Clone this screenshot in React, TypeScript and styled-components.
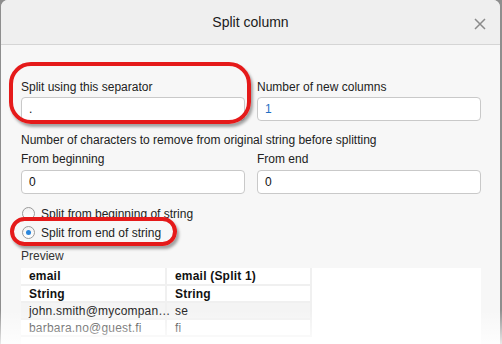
import React from 'react'
import styled, { createGlobalStyle } from 'styled-components'

const GlobalStyle = createGlobalStyle`
  html, body {
    margin: 0;
    padding: 0;
    background: #ffffff;
  }
  body {
    font-family: "Liberation Sans", Arial, sans-serif;
    font-size: 12px;
    color: #222;
  }
`

const Frame = styled.div`
  position: relative;
  width: 502px;
  height: 344px;
  background: #8e8e8e;
  padding: 0 2px 0 1px;
  box-sizing: border-box;
  overflow: hidden;
`

const Dialog = styled.div`
  height: 100%;
  background: #f7f7f7;
  border-radius: 7px 7px 0 0;
  overflow: hidden;
`

const Header = styled.div`
  position: relative;
  height: 44px;
  background: #efefef;
  border-bottom: 1px solid #d5d5d5;
  display: flex;
  align-items: center;
  justify-content: center;
  font-size: 14px;
  color: #1a1a1a;
`

const CloseButton = styled.div`
  position: absolute;
  right: 14px;
  top: 17px;
  width: 12px;
  height: 12px;
`

const Body = styled.div`
  padding: 35px 19px 0 20px;
`

const Grid = styled.div`
  display: grid;
  grid-template-columns: 224px 224px;
  column-gap: 12px;
`

const Field = styled.div`
  display: flex;
  flex-direction: column;
`

const Label = styled.div<{ $gap?: number }>`
  line-height: 14px;
  margin-bottom: ${p => p.$gap ?? 3}px;
`

const SectionLabel = styled.div`
  line-height: 14px;
  margin: 12px 0 5px;
`

const Input = styled.div<{ $blue?: boolean }>`
  height: 24px;
  box-sizing: border-box;
  background: #fff;
  border: 1px solid #c9c9c9;
  border-radius: 4px;
  padding: 0 7px;
  display: flex;
  align-items: center;
  line-height: 14px;
  color: ${p => (p.$blue ? '#1f6fc4' : '#111')};
`

const Radios = styled.div`
  margin-top: 10px;
  display: flex;
  flex-direction: column;
`

const RadioRow = styled.div`
  height: 19px;
  display: flex;
  align-items: center;
  gap: 6px;
  padding-left: 1px;
`

const RadioCircle = styled.span<{ $checked?: boolean }>`
  width: 13px;
  height: 13px;
  box-sizing: border-box;
  border-radius: 50%;
  border: 1px solid #9a9a9a;
  background: linear-gradient(#f2f2f2, #ffffff);
  display: flex;
  align-items: center;
  justify-content: center;
  &::after {
    content: '';
    display: ${p => (p.$checked ? 'block' : 'none')};
    width: 5px;
    height: 5px;
    border-radius: 50%;
    background: #2a86dc;
  }
`

const PreviewLabel = styled.div`
  line-height: 14px;
  margin: 7px 0 5px;
  color: #333;
`

const PreviewBox = styled.div`
  width: 460px;
  height: 80px;
  background: #fff;
`

const Table = styled.table`
  border-collapse: collapse;
  width: 291px;
  table-layout: fixed;
`

const Row = styled.tr<{ $shade?: boolean }>`
  background: ${p => (p.$shade ? '#f4f4f4' : '#fff')};
`

const Cell = styled.td<{ $bold?: boolean }>`
  height: 17px;
  box-sizing: border-box;
  padding: 0 8px;
  border-right: 2px solid #f0f0f0;
  border-bottom: 2px solid #f0f0f0;
  font-weight: ${p => (p.$bold ? 'bold' : 'normal')};
  color: ${p => (p.$bold ? '#111' : '#222')};
  letter-spacing: 0.2px;
  white-space: nowrap;
  line-height: 14px;
`

const Highlight = styled.div<{ $x: number; $y: number; $w: number; $h: number; $r: number }>`
  position: absolute;
  left: ${p => p.$x}px;
  top: ${p => p.$y}px;
  width: ${p => p.$w}px;
  height: ${p => p.$h}px;
  box-sizing: border-box;
  border: 4px solid #e51a1a;
  border-radius: ${p => p.$r}px;
  box-shadow: 2px 3px 3px rgba(0, 0, 0, 0.35);
  pointer-events: none;
`

const Fade = styled.div`
  position: absolute;
  left: 0;
  right: 0;
  bottom: 0;
  height: 34px;
  background: linear-gradient(rgba(255, 255, 255, 0), rgba(255, 255, 255, 0.8));
  pointer-events: none;
`

export default function App() {
  return (
    <>
      <GlobalStyle />
      <Frame>
        <Dialog>
          <Header>
            Split column
            <CloseButton>
              <svg width="12" height="12" viewBox="0 0 12 12">
                <path d="M1 1L11 11M11 1L1 11" stroke="#8a8a8a" strokeWidth="1.5" />
              </svg>
            </CloseButton>
          </Header>
          <Body>
            <Grid>
              <Field>
                <Label>Split using this separator</Label>
                <Input>.</Input>
              </Field>
              <Field>
                <Label>Number of new columns</Label>
                <Input $blue>1</Input>
              </Field>
            </Grid>
            <SectionLabel>Number of characters to remove from original string before splitting</SectionLabel>
            <Grid>
              <Field>
                <Label $gap={4}>From beginning</Label>
                <Input>0</Input>
              </Field>
              <Field>
                <Label $gap={4}>From end</Label>
                <Input>0</Input>
              </Field>
            </Grid>
            <Radios>
              <RadioRow>
                <RadioCircle />
                Split from beginning of string
              </RadioRow>
              <RadioRow>
                <RadioCircle $checked />
                Split from end of string
              </RadioRow>
            </Radios>
            <PreviewLabel>Preview</PreviewLabel>
            <PreviewBox>
              <Table>
                <tbody>
                  <Row>
                    <Cell $bold>email</Cell>
                    <Cell $bold>email (Split 1)</Cell>
                  </Row>
                  <Row>
                    <Cell $bold>String</Cell>
                    <Cell $bold>String</Cell>
                  </Row>
                  <Row $shade>
                    <Cell>john.smith@mycompan…</Cell>
                    <Cell>se</Cell>
                  </Row>
                  <Row>
                    <Cell>barbara.no@guest.fi</Cell>
                    <Cell>fi</Cell>
                  </Row>
                </tbody>
              </Table>
            </PreviewBox>
          </Body>
        </Dialog>
        <Highlight $x={9} $y={62} $w={242} $h={62} $r={22} />
        <Highlight $x={10} $y={217} $w={167} $h={29} $r={15} />
        <Fade />
      </Frame>
    </>
  )
}
